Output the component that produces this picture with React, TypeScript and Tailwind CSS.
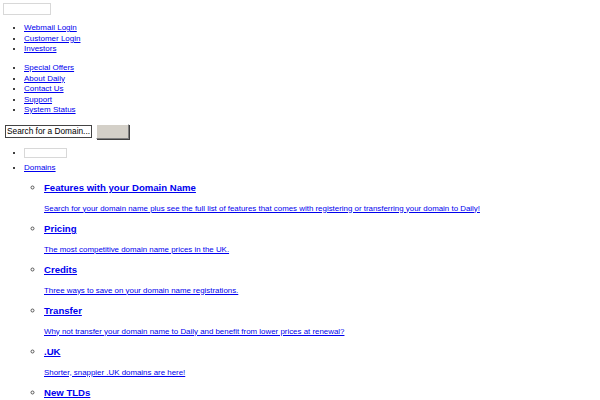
const topLinks = ["Webmail Login", "Customer Login", "Investors"];
const navLinks = ["Special Offers", "About Daily", "Contact Us", "Support", "System Status"];

const domainItems = [
  {
    title: "Features with your Domain Name",
    text: "Search for your domain name plus see the full list of features that comes with registering or transferring your domain to Daily!",
  },
  { title: "Pricing", text: "The most competitive domain name prices in the UK." },
  { title: "Credits", text: "Three ways to save on your domain name registrations." },
  {
    title: "Transfer",
    text: "Why not transfer your domain name to Daily and benefit from lower prices at renewal?",
  },
  { title: ".UK", text: "Shorter, snappier .UK domains are here!" },
  { title: "New TLDs", text: "Get your own new domain extension before anyone else." },
];

const linkCls = "text-[#0000ee] underline";

export default function App() {
  return (
    <div className="min-h-[400px] bg-white font-['Liberation_Sans',Arial,sans-serif] text-[8px] leading-[10.5px] text-black pt-[3px]">
      {/* logo placeholder */}
      <div className="ml-[3px] w-[48px] h-[12px] border border-[#d8d8d8]" />

      <ul className="list-disc pl-[24px] mt-[8px]">
        {topLinks.map((l) => (
          <li key={l}>
            <a href="#" className={linkCls}>
              {l}
            </a>
          </li>
        ))}
      </ul>

      <ul className="list-disc pl-[24px] mt-[8.5px]">
        {navLinks.map((l) => (
          <li key={l}>
            <a href="#" className={linkCls}>
              {l}
            </a>
          </li>
        ))}
      </ul>

      <form className="flex items-center gap-[4px] ml-[5px] mt-[8px]" onSubmit={(e) => e.preventDefault()}>
        <input
          type="text"
          defaultValue="Search for a Domain..."
          className="w-[87px] h-[13px] px-[1px] border border-[#444] bg-white text-[8.3px] leading-[11px] font-['Liberation_Sans',Arial,sans-serif] text-black outline-none"
        />
        <button
          type="submit"
          className="w-[33px] h-[15px] bg-[#d4d0c8] border border-t-white border-l-white border-r-[#808080] border-b-[#808080] shadow-[1px_1px_0_#404040]"
        />
      </form>

      <ul className="list-disc pl-[24px] mt-[9.5px]">
        <li className="pb-[4px]">
          <span className="inline-block align-top w-[43px] h-[10px] border border-[#d8d8d8]" />
        </li>
        <li>
          <a href="#" className={linkCls}>
            Domains
          </a>
          <ul className="list-[circle] pl-[20px]">
            {domainItems.map((d) => (
              <li key={d.title} className="marker:text-[10px] marker:text-[#555]">
                <h3 className="my-[9px] text-[9.6px] leading-[12.5px] font-bold">
                  <a href="#" className={linkCls}>
                    {d.title}
                  </a>
                </h3>
                <p className="my-[9px] text-[7.9px]">
                  <a href="#" className={linkCls}>
                    {d.text}
                  </a>
                </p>
              </li>
            ))}
          </ul>
        </li>
      </ul>
    </div>
  );
}
